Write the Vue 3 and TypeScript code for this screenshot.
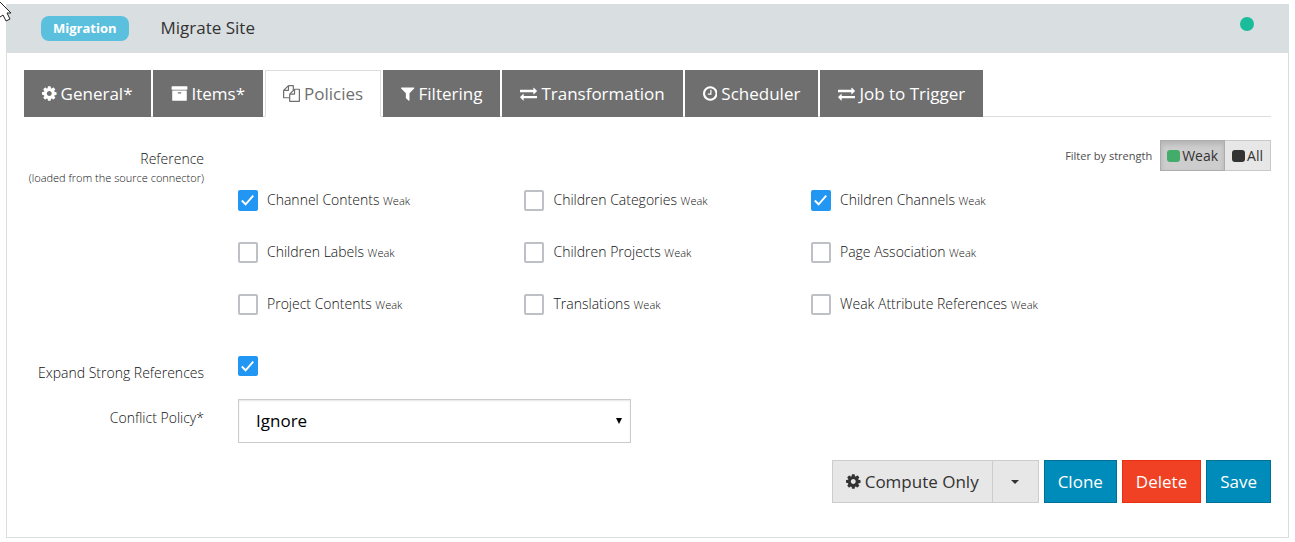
<script setup lang="ts">
import { ref } from 'vue'

interface Tab {
  label: string
  icon: string
}

interface Policy {
  id: string
  label: string
  checked: boolean
}

const icons: Record<string, string> = {
  cog: 'M1152 896q0-106-75-181t-181-75-181 75-75 181 75 181 181 75 181-75 75-181zm512-109v222q0 12-8 23t-20 13l-185 28q-19 54-39 91 35 50 107 138 10 12 10 25t-9 23q-27 37-99 108t-94 71q-12 0-26-9l-138-108q-44 23-91 38-16 136-29 186-7 28-36 28h-222q-14 0-24.5-8.5t-11.5-21.5l-28-184q-49-16-90-37l-141 107q-10 9-25 9-14 0-25-11-126-114-165-168-7-10-7-23 0-12 8-23 15-21 51-66.5t54-70.5q-27-50-41-99l-183-27q-13-2-21-12.5t-8-23.5v-222q0-12 8-23t19-13l186-28q14-46 39-92-40-57-107-138-10-12-10-24 0-10 9-23 26-36 98.5-107.5t94.5-71.5q13 0 26 10l138 107q44-23 91-38 16-136 29-186 7-28 36-28h222q14 0 24.5 8.5t11.5 21.5l28 184q49 16 90 37l142-107q9-9 24-9 13 0 25 10 129 119 165 170 7 8 7 22 0 12-8 23-15 21-51 66.5t-54 70.5q26 50 41 98l183 28q13 2 21 12.5t8 23.5z',
  archive: 'M1088 832q0-26-19-45t-45-19h-256q-26 0-45 19t-19 45 19 45 45 19h256q26 0 45-19t19-45zm576-192v960q0 26-19 45t-45 19h-1408q-26 0-45-19t-19-45v-960q0-26 19-45t45-19h1408q26 0 45 19t19 45zm64-448v256q0 26-19 45t-45 19h-1536q-26 0-45-19t-19-45v-256q0-26 19-45t45-19h1536q26 0 45 19t19 45z',
  files: 'M1696 384q40 0 68 28t28 68v1216q0 40-28 68t-68 28h-960q-40 0-68-28t-28-68v-288h-544q-40 0-68-28t-28-68v-672q0-40 20-88t48-76l408-408q28-28 76-48t88-20h416q40 0 68 28t28 68v328q68-40 128-40h416zm-544 213l-299 299h299v-299zm-640-384l-299 299h299v-299zm196 647l316-316v-416h-384v416q0 40-28 68t-68 28h-416v640h512v-256q0-40 20-88t48-76zm956 804v-1152h-384v416q0 40-28 68t-68 28h-416v640h896z',
  filter: 'M1595 295q17 41-14 70l-493 493v742q0 42-39 59-13 5-25 5-27 0-45-19l-256-256q-19-19-19-45v-486l-493-493q-31-29-14-70 17-39 59-39h1280q42 0 59 39z',
  exchange: 'M1792 1184v192q0 13-9.5 22.5t-22.5 9.5h-1376v192q0 13-9.5 22.5t-22.5 9.5q-12 0-24-10l-319-320q-9-9-9-22 0-14 9-23l320-320q9-9 23-9 13 0 22.5 9.5t9.5 22.5v192h1376q13 0 22.5 9.5t9.5 22.5zm0-544q0 14-9 23l-320 320q-9 9-23 9-13 0-22.5-9.5t-9.5-22.5v-192h-1376q-13 0-22.5-9.5t-9.5-22.5v-192q0-13 9.5-22.5t22.5-9.5h1376v-192q0-14 9-23t23-9q12 0 24 10l319 319q9 9 9 23z',
  clock: 'M1024 544v448q0 14-9 23t-23 9h-320q-14 0-23-9t-9-23v-64q0-14 9-23t23-9h224v-352q0-14 9-23t23-9h64q14 0 23 9t9 23zm416 352q0-148-73-273t-198-198-273-73-273 73-198 198-73 273 73 273 198 198 273 73 273-73 198-198 73-273zm224 0q0 209-103 385.5t-279.5 279.5-385.5 103-385.5-103-279.5-279.5-103-385.5 103-385.5 279.5-279.5 385.5-103 385.5 103 279.5 279.5 103 385.5z',
}

/* Glyph extents inside the shared 1792-unit grid, so each icon takes its own width. */
const boxes: Record<string, string> = {
  cog: '128 0 1536 1792',
  archive: '0 0 1792 1792',
  files: '0 0 1792 1792',
  filter: '192 0 1408 1792',
  exchange: '0 0 1792 1792',
  clock: '128 0 1536 1792',
}

const tabs: Tab[] = [
  { label: 'General*', icon: 'cog' },
  { label: 'Items*', icon: 'archive' },
  { label: 'Policies', icon: 'files' },
  { label: 'Filtering', icon: 'filter' },
  { label: 'Transformation', icon: 'exchange' },
  { label: 'Scheduler', icon: 'clock' },
  { label: 'Job to Trigger', icon: 'exchange' },
]
const activeTab = ref('Policies')

const policies = ref<Policy[]>([
  { id: 'channel-contents', label: 'Channel Contents', checked: true },
  { id: 'children-categories', label: 'Children Categories', checked: false },
  { id: 'children-channels', label: 'Children Channels', checked: true },
  { id: 'children-labels', label: 'Children Labels', checked: false },
  { id: 'children-projects', label: 'Children Projects', checked: false },
  { id: 'page-association', label: 'Page Association', checked: false },
  { id: 'project-contents', label: 'Project Contents', checked: false },
  { id: 'translations', label: 'Translations', checked: false },
  { id: 'weak-attributes', label: 'Weak Attribute References', checked: false },
])

const strength = ref<'weak' | 'all'>('weak')
const expandStrong = ref(true)
const conflict = ref('Ignore')
</script>

<template>
  <main class="page">
    <section class="panel">
      <header class="head">
        <span class="badge">Migration</span>
        <h1 class="title">Migrate Site</h1>
        <span class="status" role="img" aria-label="Active"></span>
      </header>

      <form class="body" @submit.prevent>
        <div class="tabs" role="tablist">
          <button
            v-for="tab in tabs"
            :key="tab.label"
            type="button"
            role="tab"
            class="tab"
            :class="{ active: tab.label === activeTab }"
            :aria-selected="tab.label === activeTab"
            @click="activeTab = tab.label"
          >
            <svg class="icon" :viewBox="boxes[tab.icon]" aria-hidden="true"><path :d="icons[tab.icon]" /></svg>
            <span>{{ tab.label }}</span>
          </button>
        </div>

        <div class="row reference">
          <div id="reference-label" class="name">
            Reference
            <small>(loaded from the source connector)</small>
          </div>
          <div class="field">
            <div class="strength">
              <span id="strength-label" class="hint">Filter by strength</span>
              <div class="toggle" role="group" aria-labelledby="strength-label">
                <button type="button" :class="{ on: strength === 'weak' }" :aria-pressed="strength === 'weak'" @click="strength = 'weak'">
                  <span class="swatch green"></span>Weak
                </button>
                <button type="button" :class="{ on: strength === 'all' }" :aria-pressed="strength === 'all'" @click="strength = 'all'">
                  <span class="swatch"></span>All
                </button>
              </div>
            </div>
            <div class="choices" role="group" aria-labelledby="reference-label">
              <label v-for="item in policies" :key="item.id" class="choice" :for="item.id">
                <span class="box">
                  <input :id="item.id" v-model="item.checked" type="checkbox" />
                  <svg viewBox="0 0 21 21" aria-hidden="true"><path d="M4 11l4 4 8-9" /></svg>
                </span>
                <span>{{ item.label }} <small>Weak</small></span>
              </label>
            </div>
          </div>
        </div>

        <div class="row expand">
          <label class="name" for="expand-strong">Expand Strong References</label>
          <div class="field">
            <span class="box">
              <input id="expand-strong" v-model="expandStrong" type="checkbox" />
              <svg viewBox="0 0 21 21" aria-hidden="true"><path d="M4 11l4 4 8-9" /></svg>
            </span>
          </div>
        </div>

        <div class="row">
          <label class="name" for="conflict">Conflict Policy*</label>
          <div class="field">
            <div class="select">
              <select id="conflict" v-model="conflict">
                <option>Ignore</option>
                <option>Overwrite</option>
              </select>
              <svg viewBox="0 0 6 6" aria-hidden="true"><path d="M0 0h6L3 6z" /></svg>
            </div>
          </div>
        </div>

        <div class="actions">
          <div class="split">
            <button type="button" class="btn grey">
              <svg class="icon" :viewBox="boxes.cog" aria-hidden="true"><path :d="icons.cog" /></svg>
              <span>Compute Only</span>
            </button>
            <button type="button" class="btn grey more" aria-label="More compute options">
              <svg viewBox="0 0 8 4" aria-hidden="true"><path d="M0 0h8L4 4z" /></svg>
            </button>
          </div>
          <button type="button" class="btn blue">Clone</button>
          <button type="button" class="btn red">Delete</button>
          <button type="submit" class="btn blue">Save</button>
        </div>
      </form>
    </section>
    <svg class="pointer" viewBox="0 0 14 22" aria-hidden="true">
      <path d="M-3 -1L11 13H7L10 19L6 21L3 15L-3 19z" />
    </svg>
  </main>
</template>

<style>
body {
  background: #fff;
}
</style>

<style scoped>
.page {
  position: relative;
  padding: 4px 6px;
  font: 400 14px/20px "Open Sans", "Noto Sans", sans-serif;
  color: #333;
}
.page * {
  box-sizing: border-box;
}
.panel {
  border: 1px solid #dadedf;
  border-top: 0;
}
.head {
  display: flex;
  align-items: center;
  height: 49px;
  margin: 0 -1px;
  padding: 0 35px;
  background: #d9dee0;
}
.badge {
  padding: 0 12px;
  border-radius: 8px;
  background: #5bc0de;
  color: #fff;
  font-size: 13px;
  font-weight: 700;
  line-height: 25px;
}
.title {
  margin: 0 0 0 32px;
  font-size: 17px;
  font-weight: 400;
  line-height: 24px;
  padding-bottom: 2px;
}
.status {
  width: 14px;
  height: 14px;
  margin: 0 0 10px auto;
  border-radius: 50%;
  background: #1abc9c;
}
.body {
  padding: 17px 17px 34px;
}
button,
select {
  margin: 0;
  border: 0;
  border-radius: 0;
  font: inherit;
  color: inherit;
}
.icon {
  flex: none;
  height: 17px;
  fill: currentColor;
}
.tabs {
  display: flex;
  gap: 2px;
  margin-bottom: 23px;
  box-shadow: inset 0 -1px #ddd;
}
.tab {
  display: flex;
  align-items: center;
  gap: 4px;
  height: 47px;
  padding: 0 18px;
  background: #6f6f6f;
  color: #fff;
  font-size: 17px;
  white-space: nowrap;
}
.tab.active {
  padding: 0 17px;
  border: 1px solid #ddd;
  border-bottom-color: #fff;
  background: #fff;
  color: #6f6f6f;
}
.row {
  display: grid;
  grid-template-columns: 180px 1fr;
  column-gap: 34px;
}
.name {
  padding-top: 9px;
  text-align: right;
  font-weight: 300;
  color: #111;
}
.name small {
  display: block;
  line-height: 18px;
  white-space: nowrap;
}
small,
.hint {
  font-size: 11px;
}
.hint {
  color: #4d4d4d;
}
.strength {
  display: flex;
  justify-content: flex-end;
  align-items: center;
  gap: 8px;
  height: 31px;
}
.toggle {
  display: flex;
}
.toggle button {
  display: flex;
  align-items: center;
  gap: 2px;
  height: 31px;
  padding: 0 7px;
  border: 1px solid #c8c8c8;
  border-left: 0;
  background: #e7e7e7;
}
.toggle .on {
  padding: 0 6px;
  border: 1px solid #adadad;
  background: #cdcdcd;
  box-shadow: inset 0 3px 5px rgba(0, 0, 0, 0.13);
}
.swatch {
  width: 13px;
  height: 12px;
  border-radius: 3px;
  background: #333;
}
.green {
  background: #43ac6a;
}
.choices {
  display: grid;
  grid-template-columns: repeat(3, 5fr);
  row-gap: 31px;
  width: 83.2%;
  margin-top: 19px;
}
.choice {
  display: flex;
  align-items: center;
  gap: 9px;
  height: 21px;
  font-weight: 300;
  line-height: 22px;
  color: #111;
  white-space: nowrap;
}
.box {
  position: relative;
  display: block;
  flex: none;
  width: 20px;
  height: 21px;
}
.box input {
  display: block;
  width: 100%;
  height: 100%;
  margin: 0;
  appearance: none;
  border: 2px solid #bdc1c5;
  border-radius: 2px;
  background: #fff;
}
.box input:checked {
  border-color: #2196f3;
  background: #2196f3;
}
.box svg {
  position: absolute;
  inset: 0;
  fill: none;
  stroke: #fff;
  stroke-width: 2;
  pointer-events: none;
}
.expand {
  margin: 41px 0 16px;
}
.expand .name {
  padding-top: 7px;
}
.expand .box {
  height: 20px;
}
.select {
  position: relative;
  width: 38%;
}
select {
  display: block;
  width: 100%;
  height: 44px;
  padding: 0 17px;
  appearance: none;
  border: 1px solid #ccc;
  background: #fff;
  box-shadow: inset 0 1px 2px rgba(0, 0, 0, 0.1);
  color: #000;
  font-size: 17px;
}
.select svg {
  position: absolute;
  top: 19px;
  right: 9px;
  width: 6px;
  height: 6px;
  pointer-events: none;
}
.actions {
  display: flex;
  justify-content: flex-end;
  gap: 5px;
  margin-top: 17px;
}
.split {
  display: flex;
}
.btn {
  display: flex;
  align-items: center;
  gap: 4px;
  height: 43px;
  padding: 0 13px;
  border: 1px solid;
  color: #fff;
  font-size: 17px;
  white-space: nowrap;
}
.grey {
  border-color: #ccc;
  background: #e7e7e7;
  color: #333;
}
.more {
  width: 46px;
  justify-content: center;
  border-left: 0;
}
.more svg {
  width: 8px;
  height: 4px;
  fill: #333;
}
.blue {
  border-color: #007095;
  background: #008cba;
}
.red {
  border-color: #ea2f10;
  background: #f04124;
}
.pointer {
  position: absolute;
  top: 0;
  left: 0;
  width: 14px;
  height: 22px;
  fill: #fff;
  stroke: #222;
}
</style>
